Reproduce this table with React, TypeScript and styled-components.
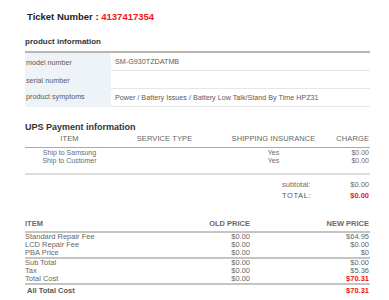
import styled, { createGlobalStyle } from "styled-components";

const GlobalStyle = createGlobalStyle`
  html, body {
    margin: 0;
    padding: 0;
    background: #fff;
  }
  body {
    font-family: "Liberation Sans", Arial, sans-serif;
    color: #555;
  }
`;

const Page = styled.div`
  width: 345px;
  padding: 11px 0 0 25px;
`;

const TicketTitle = styled.h1`
  margin: 0 0 0 2px;
  font-size: 9.5px;
  line-height: 12px;
  font-weight: bold;
  color: #222;

  & > span {
    color: #f31414;
  }
`;

const SectionTitle = styled.h2<{ $size?: number; $top: number; $bottom?: number }>`
  margin: ${(p) => p.$top}px 0 ${(p) => p.$bottom ?? 0}px;
  font-size: ${(p) => p.$size ?? 8}px;
  line-height: ${(p) => (p.$size ?? 8) + 2}px;
  font-weight: bold;
  color: #333;
`;

/* product information */

const InfoTable = styled.div`
  border-top: 2px solid #b9b5b1;
  display: grid;
  grid-template-columns: 86px 1fr;
  font-size: 7.2px;
`;

const InfoLabel = styled.div<{ $alignTop?: boolean }>`
  background: #eef3f8;
  height: 18px;
  padding: ${(p) => (p.$alignTop ? "3px" : "0")} 0 0 1px;
  box-sizing: border-box;
  display: flex;
  align-items: ${(p) => (p.$alignTop ? "flex-start" : "center")};
  line-height: 9px;
  color: #5a5a5a;
`;

const InfoValue = styled.div<{ $alignLow?: boolean }>`
  height: 18px;
  box-sizing: border-box;
  border-bottom: 1px solid #e6e6e6;
  padding: ${(p) => (p.$alignLow ? "4px 0 0" : "0")} 4px;
  display: flex;
  align-items: ${(p) => (p.$alignLow ? "flex-start" : "center")};
  line-height: 9px;
  color: #5a5a5a;
  white-space: nowrap;
`;

/* UPS payment */

const ShipGrid = styled.div`
  display: grid;
  grid-template-columns: 90px 100px 118px 1fr;
  font-size: 7px;
  color: #666;
`;

const ShipHead = styled.div<{ $align: string }>`
  text-align: ${(p) => p.$align};
  font-size: 7.5px;
  line-height: 9px;
  padding: 0 1px 4px 0;
  border-bottom: 1px solid #a9a9a9;
  color: #666;
  letter-spacing: 0.1px;
`;

const ShipCell = styled.div<{ $align: string; $first?: boolean }>`
  text-align: ${(p) => p.$align};
  line-height: 7.5px;
  padding: ${(p) => (p.$first ? "1px" : "0")} 1px 0 0;
  color: #6a6a6a;
`;

const ShipSpacer = styled.div`
  grid-column: 1 / -1;
  height: 9px;
  border-bottom: 2px solid #dcdcdc;
`;

const Totals = styled.div`
  display: grid;
  grid-template-columns: 257px 34px 1fr;
  padding-top: 4px;
  font-size: 7.5px;
  line-height: 11px;
  color: #6a6a6a;
`;

const TotalLabel = styled.div<{ $strong?: boolean }>`
  grid-column: 2;
  text-align: left;
  letter-spacing: ${(p) => (p.$strong ? "0.6px" : "0")};
  color: ${(p) => (p.$strong ? "#555" : "#6a6a6a")};
`;

const TotalValue = styled.div<{ $red?: boolean }>`
  text-align: right;
  padding-right: 1px;
  color: ${(p) => (p.$red ? "#f31414" : "#6a6a6a")};
  font-weight: ${(p) => (p.$red ? "bold" : "normal")};
`;

/* prices */

const PriceGrid = styled.div`
  margin-top: 18px;
  display: grid;
  grid-template-columns: 1fr 80px 119px;
  font-size: 7.5px;
  color: #666;
`;

const PriceHead = styled.div<{ $align: string }>`
  text-align: ${(p) => p.$align};
  font-weight: bold;
  line-height: 9px;
  padding: 0 1px 3px 0;
  border-bottom: 2px solid #c4c4c4;
  color: #6a6a6a;
`;

const PriceCell = styled.div<{ $align: string; $red?: boolean; $rule?: boolean }>`
  text-align: ${(p) => p.$align};
  line-height: 8px;
  padding-right: 1px;
  color: ${(p) => (p.$red ? "#f31414" : "#666")};
  font-weight: ${(p) => (p.$red ? "bold" : "normal")};
  border-bottom: ${(p) => (p.$rule ? "2px solid #c4c4c4" : "none")};
`;

const GrandRow = styled.div`
  grid-column: 1 / -1;
  display: flex;
  justify-content: space-between;
  padding: 1px 1px 0 2px;
  line-height: 9px;
  font-weight: bold;
  color: #5a5a5a;

  & > span:last-child {
    color: #f31414;
  }
`;

const shipments = [
  { item: "Ship to Samsung", service: "", insurance: "Yes", charge: "$0.00" },
  { item: "Ship to Customer", service: "", insurance: "Yes", charge: "$0.00" },
];

const priceGroups = [
  [
    { item: "Standard Repair Fee", old: "$0.00", price: "$64.95" },
    { item: "LCD Repair Fee", old: "$0.00", price: "$0.00" },
    { item: "PBA Price", old: "$0.00", price: "$0" },
  ],
  [
    { item: "Sub Total", old: "$0.00", price: "$0.00" },
    { item: "Tax", old: "$0.00", price: "$5.36" },
    { item: "Total Cost", old: "$0.00", price: "$70.31", red: true },
  ],
];

export default function App() {
  return (
    <>
      <GlobalStyle />
      <Page>
        <TicketTitle>
          Ticket Number : <span>4137417354</span>
        </TicketTitle>

        <SectionTitle $top={14} $bottom={4}>
          product information
        </SectionTitle>
        <InfoTable>
          <InfoLabel>model number</InfoLabel>
          <InfoValue>SM-G930TZDATMB</InfoValue>
          <InfoLabel>serial number</InfoLabel>
          <InfoValue />
          <InfoLabel $alignTop>product symptoms</InfoLabel>
          <InfoValue $alignLow>
            Power / Battery Issues / Battery Low Talk/Stand By Time HPZ31
          </InfoValue>
        </InfoTable>

        <SectionTitle $size={9} $top={15} $bottom={1}>
          UPS Payment information
        </SectionTitle>
        <ShipGrid>
          <ShipHead $align="center">ITEM</ShipHead>
          <ShipHead $align="center">SERVICE TYPE</ShipHead>
          <ShipHead $align="center">SHIPPING INSURANCE</ShipHead>
          <ShipHead $align="right">CHARGE</ShipHead>
          {shipments.map((s, i) => (
            <>
              <ShipCell key={`i${i}`} $align="center" $first={i === 0}>
                {s.item}
              </ShipCell>
              <ShipCell key={`s${i}`} $align="center" $first={i === 0}>
                {s.service}
              </ShipCell>
              <ShipCell key={`n${i}`} $align="center" $first={i === 0}>
                {s.insurance}
              </ShipCell>
              <ShipCell key={`c${i}`} $align="right" $first={i === 0}>
                {s.charge}
              </ShipCell>
            </>
          ))}
          <ShipSpacer />
        </ShipGrid>
        <Totals>
          <TotalLabel>subtotal:</TotalLabel>
          <TotalValue>$0.00</TotalValue>
          <TotalLabel $strong>TOTAL:</TotalLabel>
          <TotalValue $red>$0.00</TotalValue>
        </Totals>

        <PriceGrid>
          <PriceHead $align="left">ITEM</PriceHead>
          <PriceHead $align="right">OLD PRICE</PriceHead>
          <PriceHead $align="right">NEW PRICE</PriceHead>
          {priceGroups.map((group) =>
            group.map((row, i) => {
              const last = i === group.length - 1;
              return (
                <>
                  <PriceCell key={row.item} $align="left" $rule={last}>
                    {row.item}
                  </PriceCell>
                  <PriceCell key={row.item + "o"} $align="right" $rule={last}>
                    {row.old}
                  </PriceCell>
                  <PriceCell key={row.item + "n"} $align="right" $rule={last} $red={row.red}>
                    {row.price}
                  </PriceCell>
                </>
              );
            })
          )}
          <GrandRow>
            <span>All Total Cost</span>
            <span>$70.31</span>
          </GrandRow>
        </PriceGrid>
      </Page>
    </>
  );
}
